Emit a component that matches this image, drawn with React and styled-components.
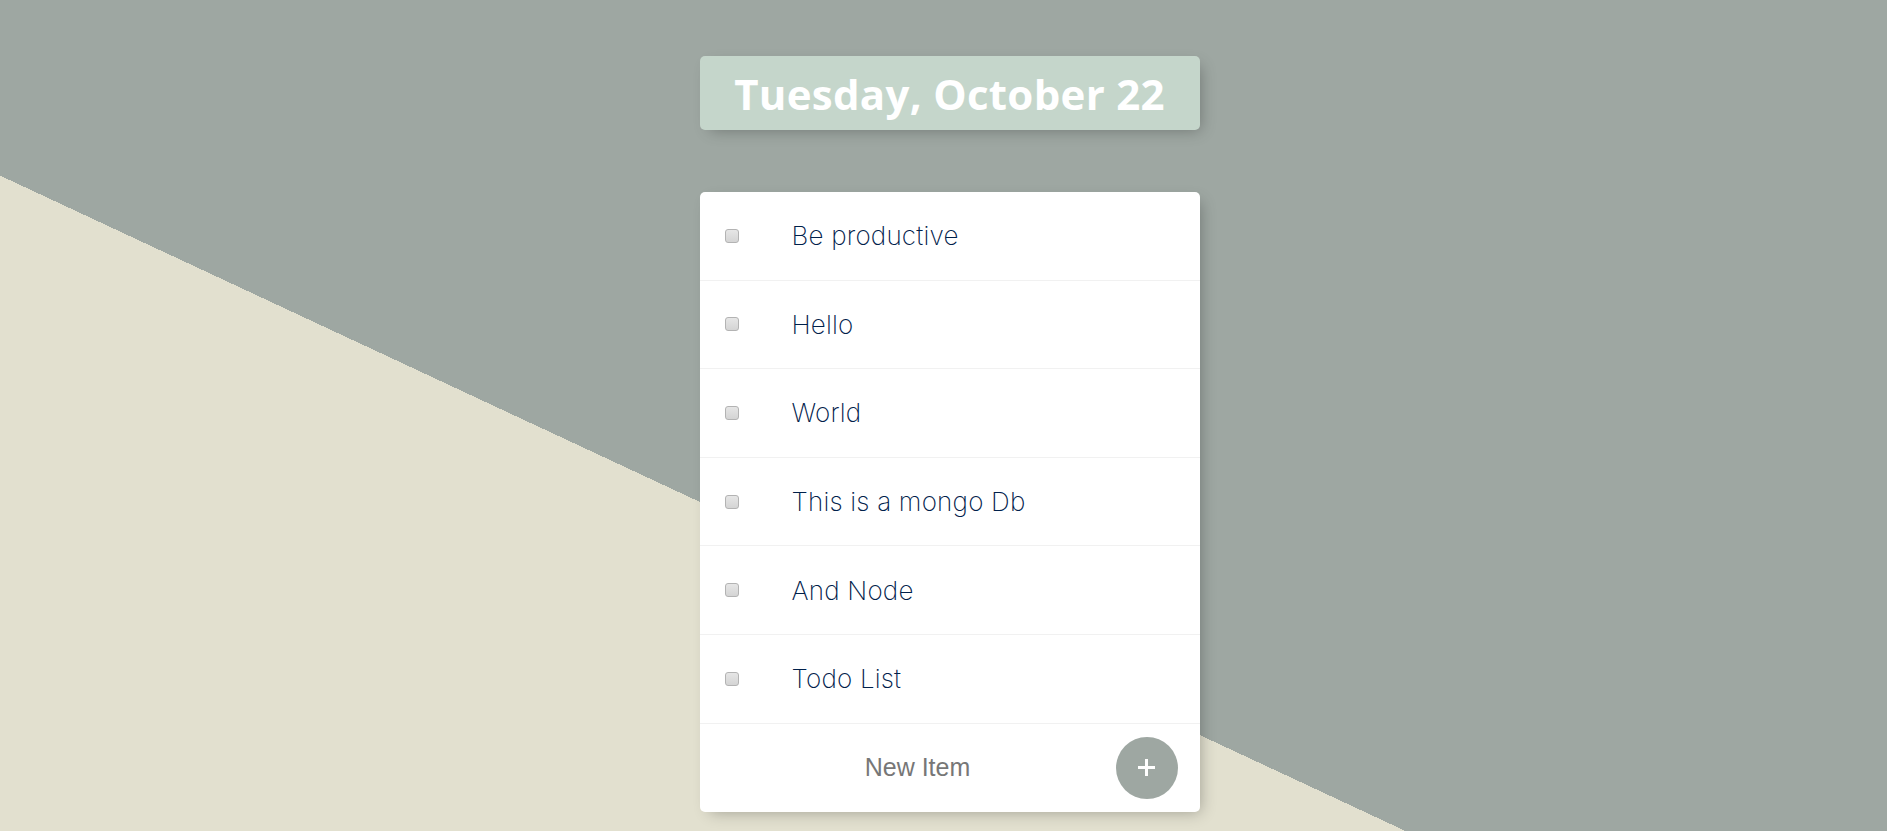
import React from "react";
import styled, { createGlobalStyle } from "styled-components";

const GlobalStyle = createGlobalStyle`
  body {
    margin: 0;
  }
`;

const items = [
  "Be productive",
  "Hello",
  "World",
  "This is a mongo Db",
  "And Node",
  "Todo List",
];

const Page = styled.div`
  height: 100vh;
  overflow: hidden;
  display: flex;
  flex-direction: column;
  align-items: center;
  padding: 56px 0 0 12px;
  box-sizing: border-box;
  background: linear-gradient(25deg, #e2e0cf 594px, #9ea7a2 594px);
`;

const Heading = styled.div`
  width: 500px;
  height: 74px;
  display: flex;
  align-items: center;
  justify-content: center;
  background: #c5d6cb;
  border-radius: 5px;
  box-shadow: 5px 5px 15px -5px rgba(0, 0, 0, 0.3);
`;

const Title = styled.h1`
  margin: 0;
  color: #fff;
  font-family: "Open Sans", "Noto Sans", sans-serif;
  font-weight: 700;
  font-size: 42px;
  letter-spacing: 0.3px;
`;

const Card = styled.div`
  margin-top: 62px;
  width: 500px;
  background: #fff;
  border-radius: 5px;
  box-shadow: 5px 5px 15px -5px rgba(0, 0, 0, 0.3);
`;

const Item = styled.div`
  height: 88.6px;
  box-sizing: border-box;
  display: flex;
  align-items: center;
  border-bottom: 1px solid #f1f1f1;
`;

const Check = styled.input.attrs({ type: "checkbox" })`
  appearance: none;
  margin: 0 0 0 25px;
  width: 14px;
  height: 14px;
  border: 1px solid #b3b3b3;
  border-radius: 3px;
  background: linear-gradient(#e6e6e6, #d4d4d4);
  box-sizing: border-box;
`;

const Label = styled.p`
  margin: 0 0 0 53px;
  font-family: "Inter", "Open Sans", sans-serif;
  font-weight: 200;
  font-size: 26px;
  letter-spacing: 0.2px;
  color: #00204a;
`;

const Footer = styled.form`
  height: 88px;
  display: flex;
  align-items: center;
  padding: 0 22px 0 20px;
`;

const NewItem = styled.input`
  flex: 1;
  border: none;
  outline: none;
  background: transparent;
  text-align: center;
  font-family: "Liberation Sans", Arial, sans-serif;
  font-size: 25px;
  color: #777;
  &::placeholder {
    color: #777;
  }
`;

const AddButton = styled.button`
  width: 62px;
  height: 62px;
  border: none;
  border-radius: 50%;
  background: #9ea7a2;
  display: flex;
  align-items: center;
  justify-content: center;
  padding: 0;
`;

export default function App() {
  return (
    <>
      <GlobalStyle />
      <Page>
        <Heading>
          <Title>Tuesday, October 22</Title>
        </Heading>
        <Card>
          {items.map(text => (
            <Item key={text}>
              <Check />
              <Label>{text}</Label>
            </Item>
          ))}
          <Footer onSubmit={e => e.preventDefault()}>
            <NewItem placeholder="New Item" />
            <AddButton type="submit">
              <svg width="19" height="19" viewBox="0 0 19 19">
                <path d="M9.5 1v17M1 9.5h17" stroke="#fff" strokeWidth="3" />
              </svg>
            </AddButton>
          </Footer>
        </Card>
      </Page>
    </>
  );
}
